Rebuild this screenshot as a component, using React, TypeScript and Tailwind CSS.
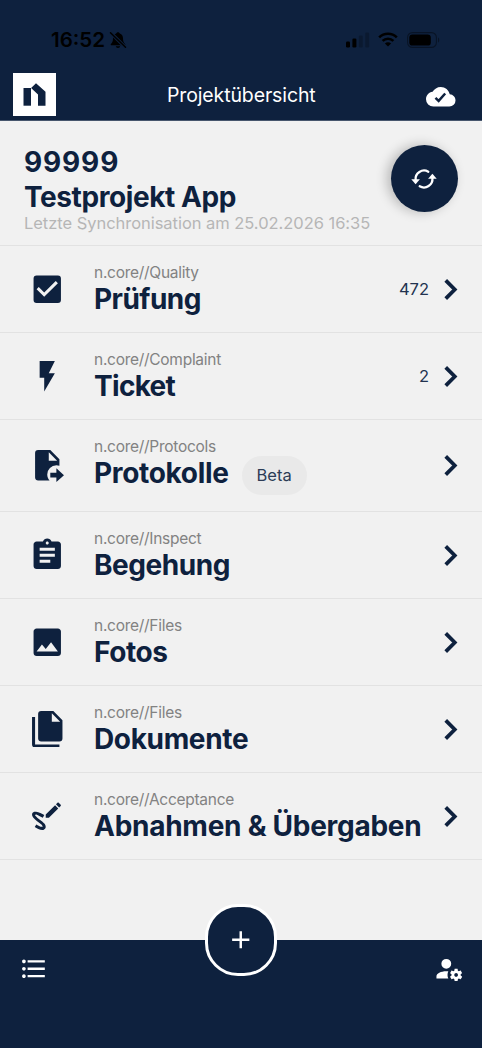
import type { ReactNode } from "react";
import {
  MdAdd,
  MdAssignment,
  MdCheckBox,
  MdFlashOn,
  MdFormatListBulleted,
  MdImage,
} from "react-icons/md";

type Module = {
  category: string;
  title: string;
  tracking: string;
  icon: ReactNode;
  count?: number;
  beta?: boolean;
};

function PathIcon({ d, className }: { d: string; className: string }) {
  return (
    <svg viewBox="0 0 24 24" fill="currentColor" className={className}>
      <path d={d} />
    </svg>
  );
}

const fileMove =
  "M14,17H18V14L23,18.5L18,23V20H14V17M13,9H18.5L13,3.5V9M6,2H14L20,8V12.34C19.37,12.12 18.7,12 18,12A6,6 0 0,0 12,18C12,19.54 12.58,20.94 13.53,22H6C4.89,22 4,21.1 4,20V4A2,2 0 0,1 6,2Z";
const fileMultiple =
  "M15,7H20.5L15,1.5V7M8,0H16L22,6V18A2,2 0 0,1 20,20H8C6.89,20 6,19.1 6,18V2A2,2 0 0,1 8,0M4,4V22H20V24H4A2,2 0 0,1 2,22V4H4Z";
const draw =
  "M9.75 20.85C11.53 20.15 11.14 18.22 10.24 17C9.35 15.75 8.12 14.89 6.88 14.06C6 13.5 5.19 12.8 4.54 12C4.26 11.67 3.69 11.06 4.27 10.94C4.86 10.82 5.88 11.4 6.4 11.62C7.31 12 8.21 12.44 9.05 12.96L10.06 11.26C8.5 10.23 6.5 9.32 4.64 9.05C3.58 8.89 2.46 9.11 2.1 10.26C1.78 11.25 2.29 12.25 2.87 13.03C4.24 14.86 6.37 15.74 7.96 17.32C8.3 17.65 8.71 18.04 8.91 18.5C9.12 18.94 9.07 18.97 8.6 18.97C7.36 18.97 5.81 18 4.8 17.36L3.79 19.06C5.32 20 7.88 21.47 9.75 20.85M20.84 5.25C21.06 5.03 21.06 4.67 20.84 4.46L19.54 3.16C19.33 2.95 18.97 2.95 18.76 3.16L17.74 4.18L19.82 6.26M11 10.92V13H13.08L19.23 6.85L17.15 4.77L11 10.92Z";
const accountCog =
  "M10 4A4 4 0 0 0 6 8A4 4 0 0 0 10 12A4 4 0 0 0 14 8A4 4 0 0 0 10 4M17 12C16.87 12 16.76 12.09 16.74 12.21L16.55 13.53C16.25 13.66 15.96 13.82 15.7 14L14.46 13.5C14.35 13.5 14.22 13.5 14.15 13.63L13.15 15.36C13.09 15.47 13.11 15.6 13.21 15.68L14.27 16.5C14.25 16.67 14.24 16.83 14.24 17C14.24 17.17 14.25 17.33 14.27 17.5L13.21 18.32C13.12 18.4 13.09 18.53 13.15 18.64L14.15 20.37C14.21 20.5 14.34 20.5 14.46 20.5L15.7 20C15.96 20.18 16.24 20.35 16.55 20.47L16.74 21.79C16.76 21.91 16.86 22 17 22H19C19.11 22 19.22 21.91 19.24 21.79L19.43 20.47C19.73 20.34 20 20.18 20.27 20L21.5 20.5C21.63 20.5 21.76 20.5 21.83 20.37L22.83 18.64C22.89 18.53 22.86 18.4 22.77 18.32L21.7 17.5C21.72 17.33 21.74 17.17 21.74 17C21.74 16.83 21.73 16.67 21.7 16.5L22.76 15.68C22.85 15.6 22.88 15.47 22.82 15.36L21.82 13.63C21.76 13.5 21.63 13.5 21.5 13.5L20.27 14C20 13.82 19.73 13.65 19.42 13.53L19.23 12.21C19.22 12.09 19.11 12 19 12H17M10 14C5.58 14 2 15.79 2 18V20H11.68A7 7 0 0 1 11 17A7 7 0 0 1 11.64 14.09C11.11 14.03 10.56 14 10 14M18 15.5C18.83 15.5 19.5 16.17 19.5 17C19.5 17.83 18.83 18.5 18 18.5C17.16 18.5 16.5 17.83 16.5 17C16.5 16.17 17.17 15.5 18 15.5Z";

const iconSize = "size-[36.5px]";

const modules: Module[] = [
  { category: "n.core//Quality", title: "Prüfung", tracking: "tracking-[-0.55px]", icon: <MdCheckBox className={iconSize} />, count: 472 },
  { category: "n.core//Complaint", title: "Ticket", tracking: "tracking-[-0.7px]", icon: <MdFlashOn className={iconSize} />, count: 2 },
  { category: "n.core//Protocols", title: "Protokolle", tracking: "tracking-[-0.33px]", icon: <PathIcon d={fileMove} className={iconSize} />, beta: true },
  { category: "n.core//Inspect", title: "Begehung", tracking: "tracking-[-0.45px]", icon: <MdAssignment className={iconSize} /> },
  { category: "n.core//Files", title: "Fotos", tracking: "tracking-[-0.4px]", icon: <MdImage className={iconSize} /> },
  { category: "n.core//Files", title: "Dokumente", tracking: "tracking-[-0.35px]", icon: <PathIcon d={fileMultiple} className={iconSize} /> },
  { category: "n.core//Acceptance", title: "Abnahmen & Übergaben", tracking: "tracking-[-0.26px]", icon: <PathIcon d={draw} className={iconSize} /> },
];

function StatusBar() {
  return (
    <div className="flex h-[73px] items-start justify-between pt-[27px] pr-[42px] pl-[51px] text-black">
      <div className="flex items-center">
        <span className="text-[20.5px] leading-[25px] font-semibold">16:52</span>
        <svg viewBox="0 0 18 18" className="ml-[4px] size-[18px]">
          <path
            d="M9 1.2c.9 0 1.6.6 1.8 1.4 2.1.7 3.2 2.5 3.2 4.7 0 3.3.7 4.3 2.1 5.7.5.6.2 1.3-.6 1.3H2.5c-.8 0-1.1-.7-.6-1.3C3.3 11.6 4 10.6 4 7.3c0-2.2 1.1-4 3.2-4.7C7.4 1.8 8.1 1.2 9 1.2zM6.8 15.3h4.4c-.2 1-1.1 1.7-2.2 1.7s-2-.7-2.2-1.7z"
            fill="currentColor"
          />
          <path d="M1.5 1.5L16.5 16.5" stroke="#0e213e" strokeWidth="3.4" />
          <path d="M1.5 1.7L16.5 16.3" stroke="currentColor" strokeWidth="1.5" strokeLinecap="round" />
        </svg>
      </div>
      <div className="flex h-[25px] items-center">
        <svg viewBox="0 0 24 16" className="h-4 w-6" fill="currentColor">
          <rect x="0" y="9.5" width="4" height="6" rx="1.2" />
          <rect x="6.4" y="6.5" width="4" height="9" rx="1.2" />
          <rect x="12.8" y="3.5" width="4" height="12" rx="1.2" opacity="0.22" />
          <rect x="19.2" y="0.5" width="4" height="15" rx="1.2" opacity="0.22" />
        </svg>
        <svg viewBox="0 0 20 15" className="ml-2 h-[15px] w-5" fill="none" stroke="currentColor" strokeWidth="2.6">
          <path d="M1.2 5.4a12.6 12.6 0 0 1 17.6 0" />
          <path d="M4.6 8.9a7.7 7.7 0 0 1 10.8 0" />
          <path d="M10 14.6L6.9 11.5a4.4 4.4 0 0 1 6.2 0z" fill="currentColor" stroke="none" />
        </svg>
        <svg viewBox="0 0 33 16" className="ml-[9px] h-4 w-[33px]">
          <rect x="0.6" y="0.6" width="28.8" height="14.8" rx="4.8" fill="none" stroke="black" strokeOpacity="0.4" strokeWidth="1.1" />
          <rect x="2.3" y="2.4" width="21.5" height="11.2" rx="3.2" fill="black" />
          <path d="M31 5.5c1.7.6 1.7 4.4 0 5z" fill="black" fillOpacity="0.4" />
        </svg>
      </div>
    </div>
  );
}

function Logo() {
  return (
    <svg viewBox="0 0 43 43" className="size-[43px] bg-white" fill="#0e213e">
      <path d="M10.5 15H18V32.7H10.5z" />
      <path d="M18.1 14.9L23 10.2L32.5 18.7V32.7H25V21.4z" />
    </svg>
  );
}

function AppHeader() {
  return (
    <header className="h-[121px] shrink-0 border-b border-[#47566d] bg-[#0e213e] text-white">
      <StatusBar />
      <div className="flex h-[43px] items-center justify-between pr-[26px] pl-[13px]">
        <Logo />
        <h1 className="text-[19.5px] leading-6 tracking-[-0.12px]">Projektübersicht</h1>
        <svg viewBox="0 0 24 24" className="mt-1 size-[29.5px]">
          <path
            d="M19.35 10.03C18.67 6.59 15.64 4 12 4C9.11 4 6.6 5.64 5.35 8.03C2.34 8.36 0 10.9 0 14A6 6 0 0 0 6 20H19A5 5 0 0 0 24 15C24 12.36 21.95 10.22 19.35 10.03Z"
            fill="currentColor"
          />
          <path d="M7.7 12.9L10.3 15.4L15.6 9.4" fill="none" stroke="#0e213e" strokeWidth="2" />
        </svg>
      </div>
    </header>
  );
}

function SyncButton() {
  return (
    <button className="flex size-[67px] items-center justify-center rounded-full bg-[#0e213e] text-white shadow-[-4px_0px_12px_rgba(0,0,0,0.24)]">
      <svg viewBox="0 0 28 24" className="mr-0.5 h-6 w-7">
        <g fill="none" stroke="currentColor" strokeWidth="2.3" strokeLinecap="round">
          <path d="M5.6 13A8.5 8.5 0 0 1 18.3 4.7" />
          <path d="M22.4 11A8.5 8.5 0 0 1 9.7 19.3" />
        </g>
        <path d="M1.3 12.3H9.9L5.6 17.2z" fill="currentColor" />
        <path d="M18.1 11.7H26.7L22.4 6.8z" fill="currentColor" />
      </svg>
    </button>
  );
}

function ProjectInfo() {
  return (
    <section className="flex h-[125px] justify-between border-b border-[#e2e2e2] pt-[24px] pr-6 pl-6">
      <div>
        <p className="text-[28px] leading-[35px] font-bold tracking-[0.85px]">99999</p>
        <h2 className="text-[28px] leading-[35px] font-bold tracking-[-0.42px] whitespace-nowrap">Testprojekt App</h2>
        <p className="-mt-0.5 text-[16.5px] leading-5 tracking-[-0.04px] whitespace-nowrap text-[#b6b6b6]">
          Letzte Synchronisation am 25.02.2026 16:35
        </p>
      </div>
      <SyncButton />
    </section>
  );
}

function ModuleRow({ module }: { module: Module }) {
  return (
    <li className="flex items-center border-b border-[#e2e2e2] pt-[17px] pr-[11px] pb-[17px] pl-[28.5px]">
      {module.icon}
      <div className="ml-[29px]">
        <p className="text-[15.5px] leading-5 tracking-[-0.28px] text-[#828282]">{module.category}</p>
        <div className="flex h-8 items-start">
          <h3 className={`text-[28px] leading-8 font-bold whitespace-nowrap ${module.tracking}`}>{module.title}</h3>
          {module.beta && (
            <span className="-mt-px ml-[13px] rounded-full bg-[#e9e9e9] px-[15px] text-[16.5px] leading-[39px] text-[#2c3c56]">
              Beta
            </span>
          )}
        </div>
        {module.beta && <div className="h-[5px]" />}
      </div>
      <div className="-my-1 ml-auto flex items-center">
        {module.count !== undefined && <span className="mr-[1px] text-[16.5px] text-[#22334f]">{module.count}</span>}
        <svg viewBox="0 0 24 24" className="size-[41px]" fill="none" stroke="currentColor" strokeWidth="2.2">
          <path d="M9.2 6.7L14.5 12L9.2 17.3" />
        </svg>
      </div>
    </li>
  );
}

function BottomBar() {
  return (
    <footer className="relative mt-auto flex h-[108px] items-start justify-between bg-[#0e213e] pt-[14px] pr-[19px] pl-[19px] text-white">
      <MdFormatListBulleted className="size-[29.5px]" />
      <button className="absolute -top-9 left-[205px] flex size-[72px] items-center justify-center rounded-[33px] border-3 border-white bg-[#0e213e]">
        <MdAdd className="size-[29.5px]" />
      </button>
      <PathIcon d={accountCog} className="size-[29.5px]" />
    </footer>
  );
}

export default function App() {
  return (
    <div className="flex h-[1048px] w-[482px] flex-col overflow-hidden bg-[#f1f1f1] font-['Inter',sans-serif] text-[#0e213e]">
      <AppHeader />
      <main>
        <ProjectInfo />
        <ul>
          {modules.map((module) => (
            <ModuleRow key={module.title} module={module} />
          ))}
        </ul>
      </main>
      <BottomBar />
    </div>
  );
}
